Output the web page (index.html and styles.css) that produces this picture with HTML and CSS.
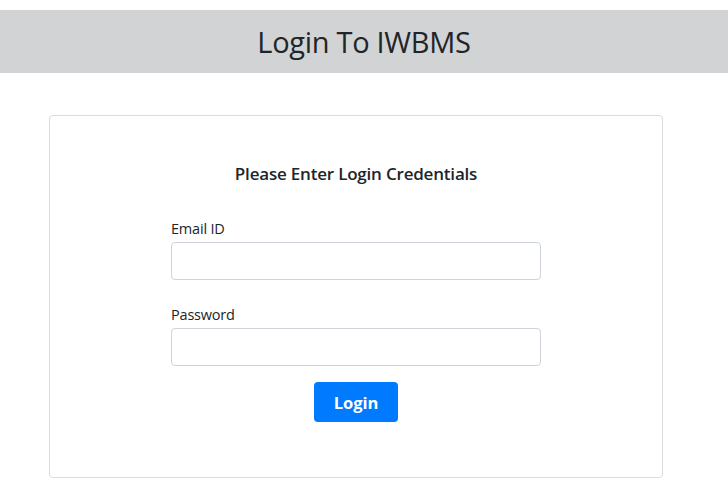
FILE: index.html
```html
<!DOCTYPE html>
<html lang="en">
<head>
<meta charset="utf-8">
<title>Login To IWBMS</title>
<link rel="stylesheet" href="styles.css">
</head>
<body>
<header class="top-bar">
  <h1 class="top-title">Login To IWBMS</h1>
</header>
<main class="card">
  <h2 class="card-title">Please Enter Login Credentials</h2>
  <form class="login-form">
    <div class="field">
      <label class="field-label" for="email">Email ID</label>
      <input class="field-input" id="email" type="text">
    </div>
    <div class="field field-last">
      <label class="field-label" for="password">Password</label>
      <input class="field-input" id="password" type="password">
    </div>
    <div class="actions">
      <button class="btn-login" type="button">Login</button>
    </div>
  </form>
</main>
</body>
</html>
```
FILE: styles.css
```css
* { box-sizing: border-box; }
html, body { margin: 0; padding: 0; background: #fff; }
body {
  font-family: "Open Sans", "Noto Sans", sans-serif;
  color: #212529;
  padding-top: 10px;
}
.top-bar {
  background: #d1d3d4;
  height: 63px;
  display: flex;
  align-items: center;
  justify-content: center;
}
.top-title {
  margin: 0;
  font-weight: 400;
  font-size: 29px;
  letter-spacing: -0.3px;
  color: #212529;
  line-height: 1;
}
.card {
  margin: 42px 65px 0 49px;
  height: 363px;
  border: 1px solid #dcdcdc;
  border-radius: 4px;
  display: flex;
  flex-direction: column;
  align-items: center;
  padding-top: 46px;
}
.card-title {
  margin: 0 0 33px;
  font-size: 17px;
  font-weight: 600;
  line-height: 24px;
  letter-spacing: -0.2px;
}
.login-form {
  width: 370px;
  display: flex;
  flex-direction: column;
}
.field { display: flex; flex-direction: column; margin-bottom: 25px; }
.field-last { margin-bottom: 16px; }
.field-label {
  font-size: 14.5px;
  line-height: 20px;
  margin-bottom: 3px;
  letter-spacing: -0.2px;
}
.field-input {
  height: 38px;
  border: 1px solid #ced4da;
  border-radius: 4px;
  font: inherit;
  padding: 6px 12px;
}
.actions { display: flex; justify-content: center; }
.btn-login {
  width: 84px;
  height: 40px;
  background: #007bff;
  color: #fff;
  border: none;
  border-radius: 4px;
  font-family: inherit;
  font-size: 16.5px;
  font-weight: 700;
}
```
